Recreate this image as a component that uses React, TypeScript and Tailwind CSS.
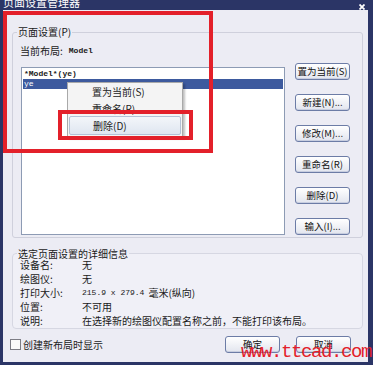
const mono = "font-['Liberation_Mono','DejaVu_Sans_Mono',monospace]";

function Boton({ label }: { label: string }) {
  return (
    <button className="h-[17px] w-[55px] shrink-0 rounded-[3px] border border-[#6c7ca6] bg-linear-to-b from-[#ffffff] to-[#e2e5ee] text-[9.5px] leading-none text-[#111] shadow-[inset_0_-1px_0_#c8cee0]">
      {label}
    </button>
  );
}

const detalles = [
  { k: '设备名:', v: '无' },
  { k: '绘图仪:', v: '无' },
  { k: '打印大小:', v: null },
  { k: '位置:', v: '不可用' },
  { k: '说明:', v: '在选择新的绘图仪配置名称之前，不能打印该布局。' },
];

export default function App() {
  return (
    <div className="relative w-[373px] h-[365px] overflow-hidden bg-[#2b3566] flex flex-col font-['Noto_Sans_CJK_SC','Noto_Sans',sans-serif] text-[#1a1a1a]">
      {/* barra de título */}
      <div className="h-[10px] shrink-0 flex justify-between overflow-hidden pl-[3px] pr-[8px]">
        <span className="text-white text-[11px] leading-[11px] -mt-[3px]">页面设置管理器</span>
        <svg width="6" height="6" viewBox="0 0 6 6" className="mt-[4px]">
          <path d="M0.5 0.5 L5.5 5.5 M5.5 0.5 L0.5 5.5" stroke="#fff" strokeWidth="1.8" />
        </svg>
      </div>

      <div className="flex-1 ml-[3px] mr-[5px] mb-[3px] bg-[#ececf4] flex flex-col">
        {/* Página */}
        <fieldset className="ml-[9px] mt-[17px] w-[351px] border border-[#cfd0dc] rounded-[3px]">
          <legend className="ml-[4px] px-[1px] text-[10px] leading-[10px]">页面设置(P)</legend>
          <div className="ml-[7px] mt-[8px] h-[12px] flex items-center text-[10px] leading-[12px]">
            <span>当前布局:</span>
            <span className={`${mono} text-[8px] ml-[6px] font-bold`}>Model</span>
          </div>
          <div className="flex mt-[6px] h-[174px] pl-[8px]">
            <div className="mt-[4px] w-[264px] h-[168px] border border-[#8d9bb4] bg-white p-[1px]">
              <div className={`${mono} text-[8px] leading-[10px] pl-[1px] font-bold`}>*Model*(ye)</div>
              <div className={`${mono} text-[8px] leading-[10px] pl-[1px] bg-[#3d5a9e] text-white`}>ye</div>
            </div>
            <div className="ml-[10px] flex flex-col gap-[14px]">
              <Boton label="置为当前(S)" />
              <Boton label="新建(N)..." />
              <Boton label="修改(M)..." />
              <Boton label="重命名(R)" />
              <Boton label="删除(D)" />
              <Boton label="输入(I)..." />
            </div>
          </div>
        </fieldset>

        {/* Detalles */}
        <fieldset className="ml-[9px] mt-[11px] w-[351px] border border-[#d6d7e2] rounded-[4px] bg-[#f0f0f7]">
          <legend className="ml-[4px] px-[1px] text-[10px] leading-[9px]">选定页面设置的详细信息</legend>
          <div className="flex flex-col text-[10px] leading-[14px]">
            {detalles.map((d) => (
              <div key={d.k} className="flex h-[14px] pl-[7px]">
                <span className="w-[62px] shrink-0">{d.k}</span>
                {d.v ? (
                  <span>{d.v}</span>
                ) : (
                  <span className="flex items-center">
                    <span className={`${mono} text-[8px]`}>215.9 x 279.4</span>
                    <span className="ml-[4px]">毫米(纵向)</span>
                  </span>
                )}
              </div>
            ))}
          </div>
        </fieldset>

        <div className="mt-[7px] h-[17px] flex items-center">
          <div className="ml-[7px] w-[11px] h-[11px] border border-[#7c7c84] bg-[#fafafa]" />
          <span className="ml-[2px] text-[10px] leading-none text-[#222]">创建新布局时显示</span>
          <div className="ml-auto mr-[17px] flex gap-[16px]">
            <Boton label="确定" />
            <Boton label="取消" />
          </div>
        </div>
      </div>

      {/* menú contextual */}
      <div className="absolute left-[67px] top-[82px] w-[116px] h-[55px] bg-[#f4f4f4] border border-[#a9a9a9] shadow-[2px_2px_2px_rgba(0,0,0,0.25)] flex flex-col text-[10px] text-[#222]">
        <div className="h-[17px] pl-[24px] flex items-center">置为当前(S)</div>
        <div className="h-[16px] pl-[24px] flex items-center">重命名(R)</div>
        <div className="h-[19px] mx-[1px] pl-[23px] flex items-center rounded-[2px] border border-[#b4c1d6] bg-linear-to-b from-[#f3f6fa] to-[#dfe6f0]">删除(D)</div>
      </div>

      {/* marcas rojas */}
      <div className="absolute left-[3px] top-[11px] w-[210px] h-[142px] border-[4px] border-[#e3202a]" />
      <div className="absolute left-[58px] top-[110px] w-[135px] h-[30px] border-[4px] border-[#e3202a]" />

      {/* marca de agua */}
      <div className={`absolute left-[241px] top-[343px] ${mono} text-[19px] leading-[19px] tracking-[-1.4px] text-[#e3202a]`}>
        www.ttcad.com
      </div>
    </div>
  );
}
